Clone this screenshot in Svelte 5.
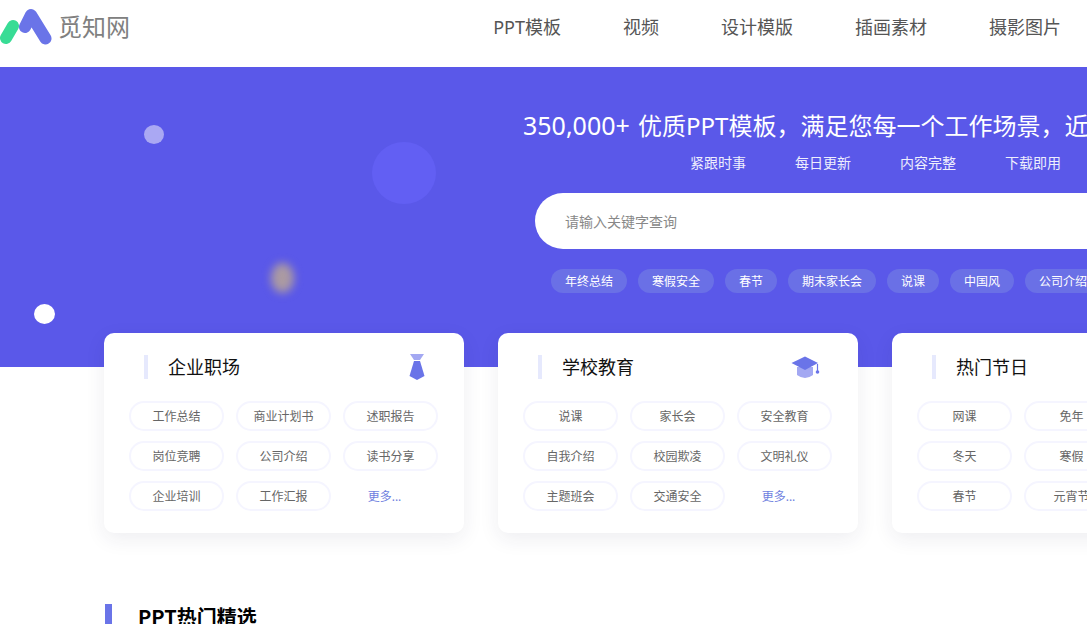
<script>
  const nav = ['PPT模板', '视频', '设计模版', '插画素材', '摄影图片'];
  const points = ['紧跟时事', '每日更新', '内容完整', '下载即用'];
  const tags = ['年终总结', '寒假安全', '春节', '期末家长会', '说课', '中国风', '公司介绍'];
  const cards = [
    { title: '企业职场', icon: 'tie', items: ['工作总结', '商业计划书', '述职报告', '岗位竞聘', '公司介绍', '读书分享', '企业培训', '工作汇报'] },
    { title: '学校教育', icon: 'cap', items: ['说课', '家长会', '安全教育', '自我介绍', '校园欺凌', '文明礼仪', '主题班会', '交通安全'] },
    { title: '热门节日', icon: '', items: ['网课', '免年', '', '冬天', '寒假', '', '春节', '元宵节'] }
  ];
</script>

<div class="page">
  <header class="top">
    <a class="brand" href="#home">
      <svg class="logo" viewBox="0 8 52 38" width="52" height="38" aria-hidden="true">
        <path d="M13 26 L6 38" stroke="#38dc95" stroke-width="12" stroke-linecap="round" fill="none"/>
        <path d="M25 27 L31 15 L45.500 38.500" stroke="#6a74e8" stroke-width="12" stroke-linecap="round" stroke-linejoin="round" fill="none"/>
      </svg>
      <span>觅知网</span>
    </a>
    <nav class="nav">
      {#each nav as item}<a href="#nav">{item}</a>{/each}
    </nav>
  </header>

  <section class="hero">
    <i class="dot dot-a"></i>
    <i class="dot dot-b"></i>
    <i class="dot dot-c"></i>
    <i class="dot dot-d"></i>
    <div class="hero-main">
      <h1><span class="count">350,000+</span> 优质PPT模板，满足您每一个工作场景，近万名设计师入驻</h1>
      <ul class="points">
        {#each points as p}<li>{p}</li>{/each}
      </ul>
      <div class="search">请输入关键字查询</div>
      <div class="tags">
        {#each tags as t}<span>{t}</span>{/each}
      </div>
    </div>
  </section>

  <section class="cards">
    {#each cards as card}
      <article class="card">
        <div class="card-head">
          <h2>{card.title}</h2>
          {#if card.icon === 'tie'}
            <svg class="tie" viewBox="0 0 16 26" width="16" height="26" aria-hidden="true">
              <path d="M1 0 H15 L11 6 H5 Z" fill="#a3a8f2"/>
              <path d="M5 7 H11 L15.500 22 L8 26 L0.500 22 Z" fill="#6a74e8"/>
            </svg>
          {:else if card.icon === 'cap'}
            <svg class="cap" viewBox="0 0 30 23" width="30" height="23" aria-hidden="true">
              <path d="M6 11 V19 Q14 25 22 19 V11 Z" fill="#a3a8f2"/>
              <path d="M0.500 7 L14 0.500 L27 7 L14 14 Z" fill="#6a74e8"/>
              <path d="M26.500 8 V15" stroke="#6a74e8" stroke-width="1.200"/>
              <circle cx="26.500" cy="16" r="1.800" fill="#6a74e8"/>
            </svg>
          {/if}
        </div>
        <div class="chips">
          {#each card.items as item}
            {#if item}<a class="chip" href="#tag">{item}</a>{:else}<a class="chip" href="#tag"></a>{/if}
          {/each}
          {#if card.icon}<a class="more" href="#more">更多...</a>{/if}
        </div>
      </article>
    {/each}
  </section>

  <section class="picks">
    <h3>PPT热门精选</h3>
  </section>
</div>

<style>
  :global(body) {
    margin: 0;
    background: #fff;
  }
  .page {
    width: 1087px;
    height: 624px;
    overflow: hidden;
    font-family: "Noto Sans", "Noto Sans CJK SC", sans-serif;
    color: #333;
  }
  a {
    color: inherit;
    text-decoration: none;
  }
  .top {
    height: 67px;
    box-sizing: border-box;
    display: flex;
    align-items: flex-start;
    justify-content: space-between;
    padding: 8px 26px 0 0;
  }
  .brand {
    display: flex;
    align-items: flex-start;
    gap: 6px;
    color: #808080;
    font-size: 24px;
    line-height: 38px;
  }
  .logo {
    display: block;
  }
  .nav {
    display: flex;
    gap: 62px;
    font-size: 18px;
    line-height: 38px;
    color: #555;
  }
  .hero {
    position: relative;
    height: 300px;
    background: #5a58e9;
    padding: 41px 0 0 523px;
    box-sizing: border-box;
    color: #fff;
  }
  .dot {
    position: absolute;
    border-radius: 50%;
  }
  .dot-a { left: 144px; top: 58px; width: 20px; height: 19px; background: #aaa8f3; }
  .dot-b { left: 372px; top: 75px; width: 64px; height: 62px; background: #625ff3; }
  .dot-c { left: 271px; top: 196px; width: 23px; height: 30px; background: #ab9aa2; filter: blur(4px); }
  .dot-d { left: 34px; top: 237px; width: 21px; height: 20px; background: #fff; }
  .hero-main {
    width: 800px;
  }
  h1 {
    margin: 0;
    height: 34px;
    font-size: 24px;
    font-weight: 400;
    line-height: 34px;
    white-space: nowrap;
  }
  .count {
    font-size: 25px;
    margin-right: 2px;
  }
  .points {
    list-style: none;
    display: flex;
    gap: 49px;
    margin: 11px 0 0 167px;
    padding: 0;
    height: 20px;
    font-size: 14px;
    line-height: 20px;
    color: #eeeefd;
  }
  .search {
    margin: 20px 0 0 12px;
    width: 700px;
    height: 56px;
    box-sizing: border-box;
    padding-left: 30px;
    border-radius: 28px;
    background: #fff;
    color: #888;
    font-size: 14px;
    line-height: 58px;
  }
  .tags {
    display: flex;
    gap: 11px;
    margin: 20px 0 0 28px;
  }
  .tags span {
    height: 24px;
    padding: 0 14px;
    border-radius: 12px;
    background: #6a70e6;
    font-size: 12px;
    line-height: 26px;
    white-space: nowrap;
  }
  .cards {
    display: flex;
    gap: 34px;
    margin: -34px 0 0 104px;
    position: relative;
  }
  .card {
    flex: none;
    width: 360px;
    height: 200px;
    box-sizing: border-box;
    padding: 20px 26px 0 25px;
    background: #fff;
    border-radius: 10px;
    box-shadow: 0 6px 20px rgba(40, 40, 80, 0.08);
  }
  .card-head {
    height: 28px;
    display: flex;
    align-items: center;
    justify-content: space-between;
    padding: 0 13px 0 15px;
    margin-bottom: 20px;
  }
  .cap {
    margin-right: -2px;
  }
  h2 {
    margin: 0;
    padding-left: 20px;
    font-size: 18px;
    font-weight: 400;
    color: #111;
    border-left: 4px solid #e6e9fd;
    line-height: 24px;
    white-space: nowrap;
  }
  .chips {
    display: grid;
    grid-template-columns: repeat(3, 95px);
    gap: 10px 12px;
  }
  .chip,
  .more {
    height: 30px;
    box-sizing: border-box;
    font-size: 12px;
    line-height: 28px;
    text-align: center;
    color: #666;
  }
  .chip {
    border: 2px solid #f5f5ff;
    border-radius: 15px;
  }
  .more {
    color: #6f7fe0;
    line-height: 32px;
    padding-right: 12px;
  }
  .picks {
    margin: 71px 0 0 105px;
  }
  h3 {
    margin: 0;
    padding-left: 26px;
    height: 40px;
    border-left: 7px solid #6a74e8;
    font-family: "Noto Sans CJK SC", "Noto Sans", sans-serif;
    font-size: 20px;
    font-weight: 700;
    color: #000;
    line-height: 26px;
  }
</style>
